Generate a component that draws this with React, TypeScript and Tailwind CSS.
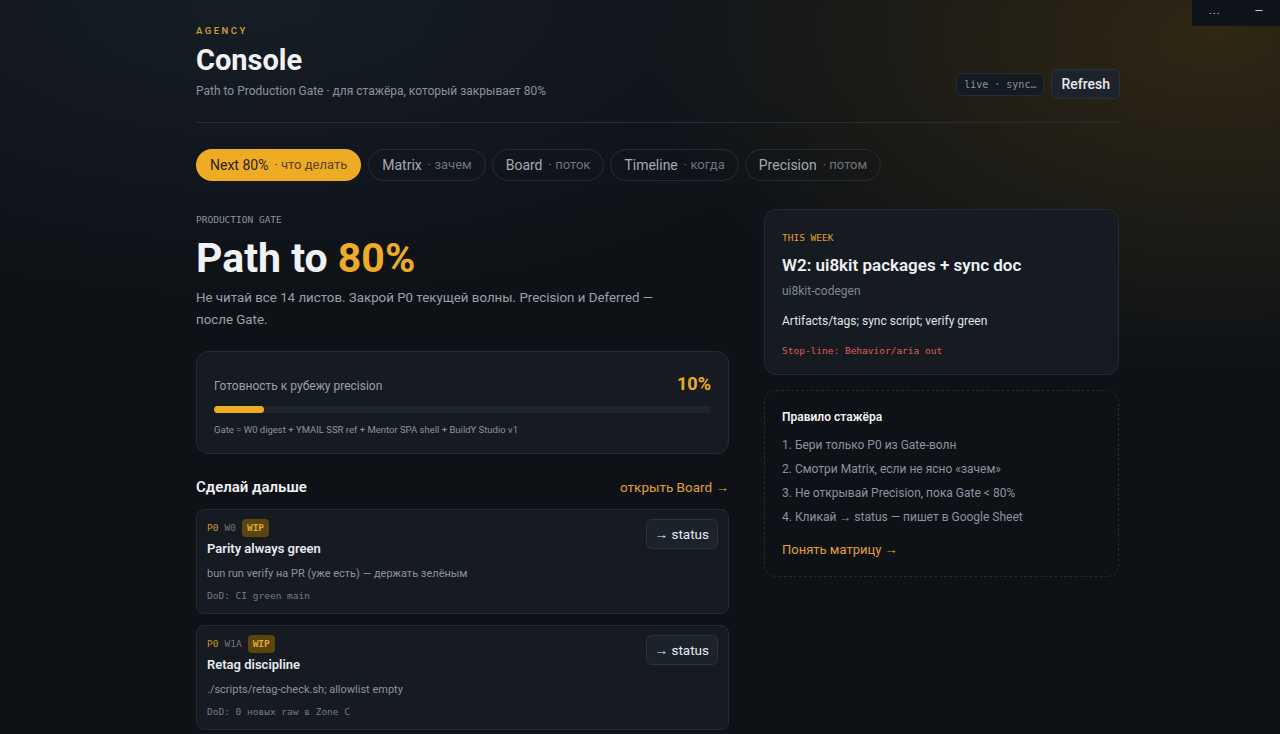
import React from "react";

const tabs = [
  { name: "Next 80%", hint: "что делать", active: true },
  { name: "Matrix", hint: "зачем" },
  { name: "Board", hint: "поток" },
  { name: "Timeline", hint: "когда" },
  { name: "Precision", hint: "потом" },
];

const tasks = [
  {
    p: "P0",
    w: "W0",
    title: "Parity always green",
    desc: "bun run verify на PR (уже есть) — держать зелёным",
    dod: "DoD: CI green main",
  },
  {
    p: "P0",
    w: "W1A",
    title: "Retag discipline",
    desc: "./scripts/retag-check.sh; allowlist empty",
    dod: "DoD: 0 новых raw в Zone C",
  },
];

const rules = [
  "1. Бери только P0 из Gate-волн",
  "2. Смотри Matrix, если не ясно «зачем»",
  "3. Не открывай Precision, пока Gate < 80%",
  "4. Кликай → status — пишет в Google Sheet",
];

const mono = "font-['DejaVu_Sans_Mono','Liberation_Mono',monospace]";

const TaskCard = ({ task }: { task: (typeof tasks)[number] }) => (
  <div className="flex items-start justify-between rounded-lg border border-[#242a33] bg-[#161b22] px-[10px] pt-[9px] pb-[10px]">
    <div className="flex flex-col">
      <div className={`flex h-[18px] items-center gap-[6px] text-[9.5px] ${mono}`}>
        <span className="text-[#c8962a]">{task.p}</span>
        <span className="text-[#6b7480]">{task.w}</span>
        <span className="rounded bg-[#5a4410] px-[5px] py-[2px] font-bold leading-[14px] text-[#e0a92e]">WIP</span>
      </div>
      <div className="mt-[3px] text-[13px] font-semibold leading-[18px] text-[#e6e9ee]">{task.title}</div>
      <div className="mt-[8px] text-[11px] leading-[16px] text-[#8b939e]">{task.desc}</div>
      <div className={`mt-[7px] text-[9.5px] leading-[14px] text-[#737b86] ${mono}`}>{task.dod}</div>
    </div>
    <button
      type="button"
      className="h-[30px] rounded-md border border-[#2a313b] bg-[#1b222b] px-[8px] text-[13.5px] leading-[18px] text-[#e6e9ee]"
    >
      → status
    </button>
  </div>
);

const App = () => {
  return (
    <div className="relative min-h-[734px] overflow-hidden bg-[#0e1217] font-['Roboto','Noto_Sans',sans-serif] text-[#e6e9ee]">
      <div className="pointer-events-none absolute inset-0 bg-[radial-gradient(ellipse_45%_45%_at_95%_5%,rgba(110,78,14,0.35),transparent)]" />
      <div className="pointer-events-none absolute inset-0 bg-[radial-gradient(ellipse_50%_40%_at_20%_0%,rgba(40,50,64,0.35),transparent)]" />

      <div className="absolute right-0 top-0 flex h-[26px] w-[88px] items-center justify-around bg-[#0f141b] text-[11px] text-[#d7dbe0]">
        <span className="-mt-[4px] tracking-[1px]">...</span>
        <span className="-mt-[4px]">—</span>
      </div>

      <div className="relative ml-[196px] w-[924px] pt-[24px]">
        <header className="flex items-start justify-between border-b border-[#262c35] pb-[22px]">
          <div>
            <div className="text-[9.5px] font-semibold leading-[14px] tracking-[2.5px] text-[#c99a34]">AGENCY</div>
            <h1 className="mt-[5px] text-[29px] font-bold leading-[34px] text-[#f0f2f5]">Console</h1>
            <div className="mt-[5px] text-[12px] leading-[18px] text-[#8b939e]">
              Path to Production Gate · для стажёра, который закрывает 80%
            </div>
          </div>
          <div className="mt-[45px] flex items-center gap-[7px]">
            <span className={`rounded-md border border-[#252c35] bg-[#141a21] px-[7px] py-[4px] text-[10px] leading-[13px] text-[#8b939e] ${mono}`}>
              live · sync…
            </span>
            <button
              type="button"
              className="h-[30px] rounded-md border border-[#2a313b] bg-[#1c232c] px-[9px] text-[14px] font-medium text-[#e6e9ee]"
            >
              Refresh
            </button>
          </div>
        </header>

        <nav className="mt-[26px] flex gap-[6px]">
          {tabs.map((t) =>
            t.active ? (
              <span
                key={t.name}
                className="mr-[1px] flex h-[32px] items-center gap-[6px] rounded-full bg-[#eeac25] px-[14px] text-[14px] text-[#2a1d05]"
              >
                {t.name}
                <span className="text-[13px] text-[#5a4012]">· {t.hint}</span>
              </span>
            ) : (
              <span
                key={t.name}
                className="flex h-[32px] items-center gap-[6px] rounded-full border border-[#262c35] px-[13px] text-[14px] text-[#a3aab4]"
              >
                {t.name}
                <span className="text-[13px] text-[#6b7480]">· {t.hint}</span>
              </span>
            )
          )}
        </nav>

        <div className="mt-[28px] grid grid-cols-[533px_355px] gap-[35px]">
          <section className="pt-[4px]">
            <div className={`text-[9.5px] leading-[14px] text-[#8b939e] ${mono}`}>PRODUCTION GATE</div>
            <h2 className="mt-[8px] text-[41px] font-bold leading-[46px] text-[#f0f2f5]">
              Path to <span className="text-[#eeac25]">80%</span>
            </h2>
            <p className="mt-[6px] text-[13.3px] leading-[22px] text-[#98a0aa]">
              Не читай все 14 листов. Закрой P0 текущей волны. Precision и Deferred —
              <br />
              после Gate.
            </p>

            <div className="mt-[20px] rounded-xl border border-[#242a33] bg-[#161b22] px-[17px] pb-[16px] pt-[20px]">
              <div className="flex items-baseline justify-between">
                <span className="text-[12px] text-[#98a0aa]">Готовность к рубежу precision</span>
                <span className="text-[18px] font-bold leading-[24px] text-[#eeac25]">10%</span>
              </div>
              <div className="mt-[10px] h-[7px] w-full rounded-full bg-[#1e252e]">
                <div className="h-[7px] w-[10%] rounded-full bg-[#eeac25]" />
              </div>
              <div className="mt-[10px] text-[9.5px] leading-[14px] text-[#8b939e]">
                Gate = W0 digest + YMAIL SSR ref + Mentor SPA shell + BuildY Studio v1
              </div>
            </div>

            <div className="mt-[22px] flex items-center justify-between">
              <h3 className="text-[15px] font-semibold leading-[22px] text-[#eef0f3]">Сделай дальше</h3>
              <span className="text-[13.5px] text-[#e0a030]">открыть Board →</span>
            </div>

            <div className="mt-[11px] flex flex-col gap-[11px]">
              {tasks.map((t) => (
                <TaskCard key={t.title} task={t} />
              ))}
            </div>
          </section>

          <aside className="flex flex-col gap-[15px]">
            <div className="rounded-xl border border-[#242a33] bg-[#161b22] px-[17px] pb-[16px] pt-[21px]">
              <div className={`text-[9.5px] leading-[14px] text-[#e0a030] ${mono}`}>THIS WEEK</div>
              <div className="mt-[9px] text-[17px] font-semibold leading-[22px] text-[#eef0f3]">W2: ui8kit packages + sync doc</div>
              <div className="mt-[7px] text-[12px] leading-[16px] text-[#7e8792]">ui8kit-codegen</div>
              <div className="mt-[14px] text-[12px] leading-[16px] text-[#dfe3e8]">Artifacts/tags; sync script; verify green</div>
              <div className={`mt-[15px] text-[9.5px] leading-[14px] text-[#e05a5a] ${mono}`}>Stop-line: Behavior/aria out</div>
            </div>

            <div className="rounded-xl border border-dashed border-[#242a33] px-[17px] pb-[17px] pt-[18px]">
              <div className="text-[12px] font-semibold leading-[16px] text-[#eef0f3]">Правило стажёра</div>
              <ul className="mt-[12px] flex flex-col gap-[8px] text-[12px] text-[#8b939e]">
                {rules.map((r) => (
                  <li key={r} className="leading-[16px]">
                    {r}
                  </li>
                ))}
              </ul>
              <div className="mt-[16px] text-[13px] leading-[18px] text-[#e0a030]">Понять матрицу →</div>
            </div>
          </aside>
        </div>
      </div>
    </div>
  );
};

export default App;
